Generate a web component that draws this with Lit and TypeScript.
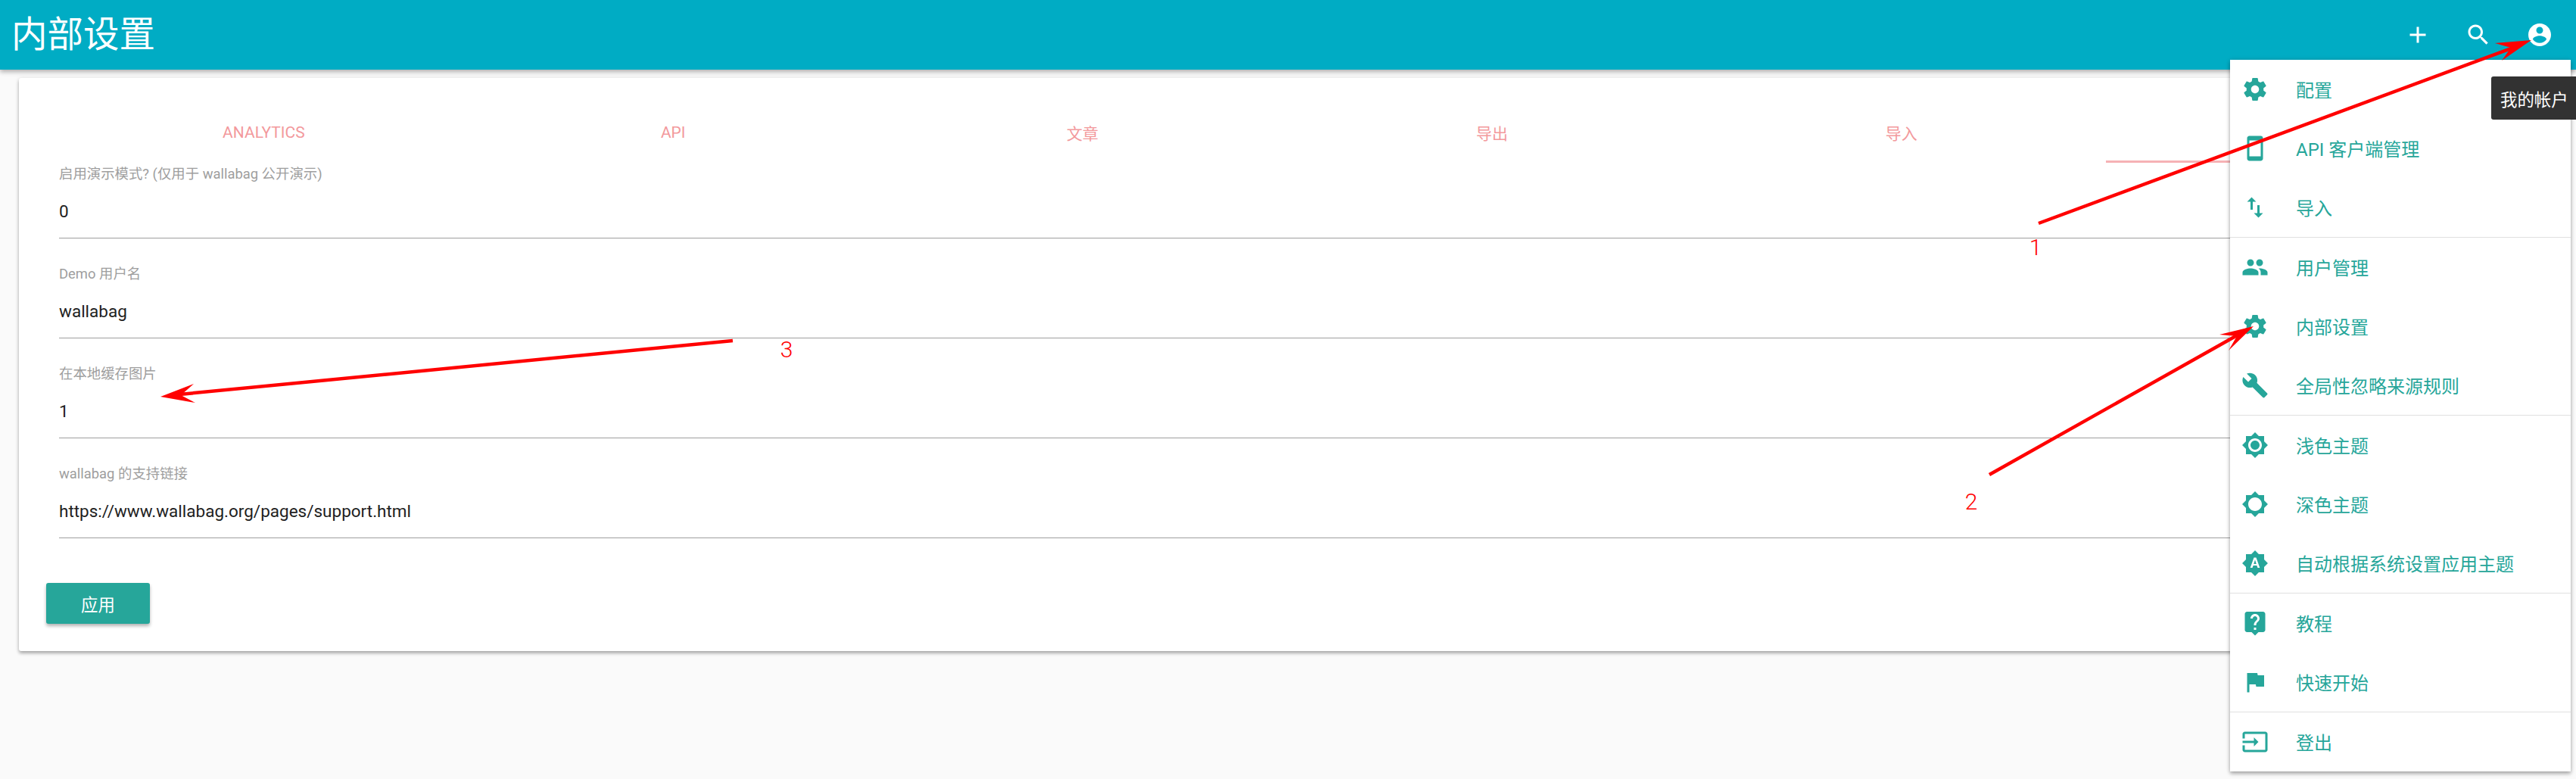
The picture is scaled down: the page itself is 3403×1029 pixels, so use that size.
import { LitElement, html, css, svg } from "lit";
import { customElement } from "lit/decorators.js";

const P: Record<string, string> = {
  settings: "M19.43 12.98c.04-.32.07-.64.07-.98s-.03-.66-.07-.98l2.11-1.65c.19-.15.24-.42.12-.64l-2-3.46c-.12-.22-.39-.3-.61-.22l-2.49 1c-.52-.4-1.08-.73-1.69-.98l-.38-2.65C14.46 2.18 14.25 2 14 2h-4c-.25 0-.46.18-.49.42l-.38 2.65c-.61.25-1.17.59-1.69.98l-2.49-1c-.23-.09-.49 0-.61.22l-2 3.46c-.13.22-.07.49.12.64l2.11 1.65c-.04.32-.07.65-.07.98s.03.66.07.98l-2.11 1.65c-.19.15-.24.42-.12.64l2 3.46c.12.22.39.3.61.22l2.49-1c.52.4 1.08.73 1.69.98l.38 2.65c.03.24.24.42.49.42h4c.25 0 .46-.18.49-.42l.38-2.65c.61-.25 1.17-.59 1.69-.98l2.49 1c.23.09.49 0 .61-.22l2-3.46c.12-.22.07-.49-.12-.64l-2.11-1.65zM12 15.5c-1.93 0-3.5-1.57-3.5-3.5s1.57-3.5 3.5-3.5 3.5 1.57 3.5 3.5-1.57 3.5-3.5 3.5z",
  phone: "M17 1.01L7 1c-1.1 0-2 .9-2 2v18c0 1.1.9 2 2 2h10c1.1 0 2-.9 2-2V3c0-1.1-.9-1.99-2-1.99zM17 19H7V5h10v14z",
  importExport: "M9 3L5 6.99h3V14h2V6.99h3L9 3zm7 14.01V10h-2v7.01h-3L15 21l4-3.99h-3z",
  group: "M16 11c1.66 0 2.99-1.34 2.99-3S17.66 5 16 5c-1.66 0-3 1.34-3 3s1.34 3 3 3zm-8 0c1.66 0 2.99-1.34 2.99-3S9.66 5 8 5C6.34 5 5 6.34 5 8s1.34 3 3 3zm0 2c-2.33 0-7 1.17-7 3.5V19h14v-2.5c0-2.33-4.67-3.5-7-3.5zm8 0c-.29 0-.62.02-.97.05 1.16.84 1.97 1.97 1.97 3.45V19h6v-2.5c0-2.33-4.67-3.5-7-3.5z",
  build: "M22.7 19l-9.1-9.1c.9-2.3.4-5-1.5-6.9-2-2-5-2.4-7.4-1.3L9 6 6 9 1.6 4.7C.4 7.1.9 10.1 2.9 12.1c1.9 1.9 4.6 2.4 6.9 1.5l9.1 9.1c.4.4 1 .4 1.4 0l2.3-2.3c.5-.4.5-1.1.1-1.4z",
  light: "M20 8.69V4h-4.69L12 .69 8.69 4H4v4.69L.69 12 4 15.31V20h4.69L12 23.31 15.31 20H20v-4.69L23.31 12 20 8.69zM12 18c-3.31 0-6-2.69-6-6s2.69-6 6-6 6 2.69 6 6-2.69 6-6 6zm0-10c-2.21 0-4 1.79-4 4s1.79 4 4 4 4-1.79 4-4-1.79-4-4-4z",
  dark: "M20 15.31L23.31 12 20 8.69V4h-4.69L12 .69 8.69 4H4v4.69L.69 12 4 15.31V20h4.69L12 23.31 15.31 20H20v-4.69zM12 18c-3.31 0-6-2.69-6-6s2.69-6 6-6 6 2.69 6 6-2.69 6-6 6z",
  auto: "M10.85 12.65h2.3L12 9l-1.15 3.65zM20 8.69V4h-4.69L12 .69 8.69 4H4v4.69L.69 12 4 15.31V20h4.69L12 23.31 15.31 20H20v-4.69L23.31 12 20 8.69zM14.3 16l-.7-2h-3.2l-.7 2H7.8L11 7h2l3.2 9h-1.9z",
  help: "M19 2H5c-1.11 0-2 .9-2 2v14c0 1.1.89 2 2 2h4l3 3 3-3h4c1.1 0 2-.9 2-2V4c0-1.1-.9-2-2-2zm-6 16h-2v-2h2v2zm2.07-7.75l-.9.92C13.45 11.9 13 12.5 13 14h-2v-.5c0-1.1.45-2.1 1.17-2.83l1.24-1.26c.37-.36.59-.86.59-1.41 0-1.1-.9-2-2-2s-2 .9-2 2H8c0-2.21 1.79-4 4-4s4 1.79 4 4c0 .88-.36 1.68-.93 2.25z",
  flag: "M14.4 6L14 4H5v17h2v-7h5.6l.4 2h7V6z",
  input: "M21 3.01H3c-1.1 0-2 .9-2 2V9h2V4.99h18v14.03H3V15H1v4.01c0 1.1.9 1.98 2 1.98h18c1.1 0 2-.88 2-1.98v-14c0-1.1-.9-2-2-2zM11 16l4-4-4-4v3H1v2h10v3z",
  add: "M19 13h-6v6h-2v-6H5v-2h6V5h2v6h6v2z",
  search: "M15.5 14h-.79l-.28-.27C15.41 12.59 16 11.11 16 9.5 16 5.91 13.09 3 9.5 3S3 5.91 3 9.5 5.91 16 9.5 16c1.61 0 3.09-.59 4.23-1.57l.27.28v.79l5 4.99L20.49 19l-4.99-5zm-6 0C7.01 14 5 11.99 5 9.5S7.01 5 9.5 5 14 7.01 14 9.5 11.99 14 9.5 14z",
  account: "M12 2C6.48 2 2 6.48 2 12s4.48 10 10 10 10-4.48 10-10S17.52 2 12 2zm0 3c1.66 0 3 1.34 3 3s-1.34 3-3 3-3-1.34-3-3 1.34-3 3-3zm0 14.2c-2.5 0-4.71-1.28-6-3.22.03-1.99 4-3.08 6-3.08 1.99 0 5.97 1.09 6 3.08-1.29 1.94-3.5 3.22-6 3.22z",
};

const icon = (n: string) => html`<svg class="ic" viewBox="0 0 24 24"><path d=${P[n]}></path></svg>`;

const groups: [string, string][][] = [
  [["settings", "配置"], ["phone", "API 客户端管理"], ["importExport", "导入"]],
  [["group", "用户管理"], ["settings", "内部设置"], ["build", "全局性忽略来源规则"]],
  [["light", "浅色主题"], ["dark", "深色主题"], ["auto", "自动根据系统设置应用主题"]],
  [["help", "教程"], ["flag", "快速开始"]],
  [["input", "登出"]],
];

const fields = [
  ["启用演示模式? (仅用于 wallabag 公开演示)", "0"],
  ["Demo 用户名", "wallabag"],
  ["在本地缓存图片", "1"],
  ["wallabag 的支持链接", "https://www.wallabag.org/pages/support.html"],
];

@customElement("app-root")
export class AppRoot extends LitElement {
  static styles = css`
    :host {
      display: block;
      position: relative;
      height: 1029px;
      overflow: hidden;
      background: #fafafa;
      font-family: Roboto, "Noto Sans CJK SC", sans-serif;
    }
    .ic { width: 36px; height: 36px; fill: currentColor; display: block; flex: none; }
    header {
      height: 92px;
      background: #00acc4;
      color: #fff;
      display: flex;
      align-items: center;
      justify-content: space-between;
      padding: 0 8px 0 15px;
      box-shadow: 0 3px 6px rgba(0,0,0,.3);
      position: relative;
      z-index: 1;
    }
    h1 { margin: 0; font-size: 47.5px; font-weight: 400; line-height: 92px; }
    .actions { display: flex; }
    .actions span { width: 80.5px; display: flex; justify-content: center; }
    .card {
      margin: 11px 25px 0;
      height: 757px;
      box-sizing: border-box;
      padding: 32px 55px 0 53px;
      background: #fff;
      border-radius: 3px;
      box-shadow: 0 3px 4px rgba(0,0,0,.3), 0 0 6px rgba(0,0,0,.08);
    }
    .tabs { display: grid; grid-template-columns: repeat(6, 1fr); height: 77px; position: relative; }
    .tabs span {
      display: flex; align-items: center; justify-content: center;
      font-size: 21px; font-weight: 400; color: #ee6e73; opacity: .7;
      height: 80px;
    }
    .tabs .ind {
      grid-column: 6; align-self: end; height: 3px; background: #f6b2b5;
    }
    .field { height: 132px; box-sizing: border-box; padding-top: 6px; }
    .field label { display: block; font-size: 18.4px; line-height: 24px; color: #9e9e9e; font-weight: 400; }
    .field div {
      height: 65px; margin-top: 7px;
      border-bottom: 1.6px solid #9e9e9e;
      font-size: 22.5px; line-height: 60px; color: #212121; font-weight: 400;
    }
    .apply {
      margin: 30px 0 0 -17px;
      width: 137px; height: 54px;
      display: flex; align-items: center; justify-content: center;
      background: #26a69a; color: #fff;
      font-size: 22.4px; border-radius: 3px;
      box-shadow: 0 3px 4px rgba(0,0,0,.3);
    }
    .menu {
      position: absolute; left: 2946px; top: 79px; width: 450px;
      background: #fff; z-index: 2;
      box-shadow: 0 3px 5px rgba(0,0,0,.3), 0 0 6px rgba(0,0,0,.12);
    }
    .group + .group { border-top: 1.6px solid #e0e0e0; }
    .row {
      height: 78px; display: flex; align-items: center; gap: 36px;
      padding-left: 15px; color: #26a69a; font-size: 24px; font-weight: 400;
    }
    .row span { padding-bottom: 2px; }
    .tip {
      position: absolute; left: 3291px; top: 101px; width: 112px; height: 57px;
      background: #323232; color: #fff; border-radius: 3px 0 0 3px; z-index: 3;
      display: flex; align-items: center; padding-left: 12px; box-sizing: border-box;
      font-size: 22.4px; font-weight: 400; white-space: nowrap;
    }
    .notes { position: absolute; left: 0; top: 0; width: 3403px; height: 1029px; z-index: 4; pointer-events: none; }
    .notes line { stroke: #f00; stroke-width: 4.5; }
    .notes polygon { fill: #f00; }
    .notes text { fill: #f00; font-family: Roboto, sans-serif; font-weight: 300; font-size: 30px; text-anchor: middle; }
  `;

  render() {
    return html`
      <header>
        <h1>内部设置</h1>
        <div class="actions">
          <span>${icon("add")}</span><span>${icon("search")}</span><span>${icon("account")}</span>
        </div>
      </header>
      <section class="card">
        <div class="tabs">
          <span>ANALYTICS</span><span>API</span><span>文章</span><span>导出</span><span>导入</span><i class="ind"></i>
        </div>
        ${fields.map(([l, v]) => html`<div class="field"><label>${l}</label><div>${v}</div></div>`)}
        <div class="apply">应用</div>
      </section>
      <nav class="menu">
        ${groups.map((g) => html`<div class="group">${g.map(([i, t]) => html`<div class="row">${icon(i)}<span>${t}</span></div>`)}</div>`)}
      </nav>
      <div class="tip">我的帐户</div>
      <svg class="notes" viewBox="0 0 3403 1029">
        ${svg`
          <line x1="2693" y1="295" x2="3320" y2="63"></line>
          <polygon points="3344,53 3296,57 3317,63 3305,80"></polygon>
          <text x="2689" y="337">1</text>
          <line x1="2628" y1="627" x2="2957" y2="442"></line>
          <polygon points="2977,431 2932,442 2955,444 2944,463"></polygon>
          <text x="2604" y="673">2</text>
          <line x1="968" y1="450" x2="237" y2="521"></line>
          <polygon points="212,524 256,507 239,522 258,532"></polygon>
          <text x="1039" y="472">3</text>
        `}
      </svg>
    `;
  }
}
